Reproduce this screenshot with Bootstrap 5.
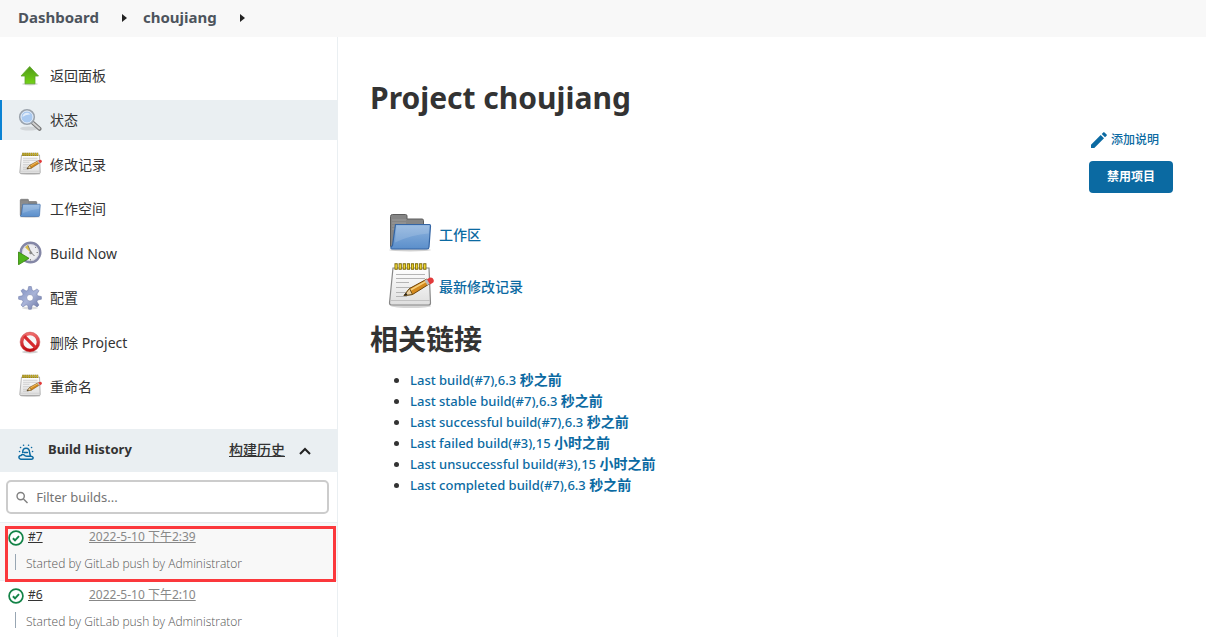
<!DOCTYPE html>
<html lang="zh-CN">
<head>
<meta charset="utf-8">
<meta name="viewport" content="width=device-width, initial-scale=1">
<title>choujiang [Jenkins]</title>
<link href="https://cdn.jsdelivr.net/npm/bootstrap@5.3.0/dist/css/bootstrap.min.css" rel="stylesheet">
<style>
  body { font-family: "Noto Sans", "Noto Sans CJK SC", sans-serif; font-size: 14px; line-height: 21px; color: #333; }
  a { color: #0b6aa2; text-decoration: none; }
  .crumbs { height: 37px; background: #f8f8f8; padding: 0 18px 2px; font-size: 15px; font-weight: 700; }
  .crumbs a { color: #4d545d; }
  .crumbs svg { width: 5px; height: 8px; margin-left: 23px; }
  .side-panel { flex: 0 0 338px; border-right: 1px solid #eaeff2; }
  .tasks { min-height: 351px; margin: 19px 0 22px; }
  .task-link { height: 40px; padding: 0 18px 1px; gap: 8px; color: #333; }
  .task-link svg { width: 24px; height: 24px; }
  .task-link.active { background: #eaeff2; box-shadow: inset 2px 0 #0b83d4; }
  .history-head { height: 43px; background: #eaeff2; padding: 0 26px 2px 18px; font-weight: 500; }
  .history-title { margin-left: 14px; font-size: 13px; font-weight: 700; }
  .history-head a { color: #333; text-decoration: underline; }
  .history-head button { line-height: 1; margin-left: 14px; }
  .filter { margin: 8px 8px 8px 6px; border: 2px solid #ccc; border-radius: 5px; height: 34px; padding: 0 8px; gap: 8px; }
  .filter input { font-size: 13px; padding: 1px 0 0; color: #333; }
  .filter input::placeholder { color: #757575; }
  .run { border-top: 1px solid #eaeff2; height: 58px; padding: 4px 8px 0; font-size: 12px; }
  .run:last-child { height: 57px; }
  .run.current { background: #f8f8f8; }
  .run-line { height: 21px; }
  .run-line a { margin-top: -2px; }
  .run-num { width: 61px; margin: -2px 0 0 4px; }
  .run-num a { color: #333; text-decoration: underline; }
  .run-date { color: #888; text-decoration: underline; }
  .cause { margin: 6px 0 0 7px; padding: 2px 0 0 10px; border-left: 1px solid #98a6b3; line-height: 16px; height: 16px; color: #555; font-family: "Open Sans", sans-serif; font-weight: 300; }
  .run-mark { position: absolute; inset: 3px 1px -2px 5px; border: 3px solid #fb383c; pointer-events: none; }
  .main-panel { padding: 39px 33px 20px 32px; }
  h1 { font-size: 30px; line-height: 44px; font-weight: 700; margin: 0; }
  h2 { font-size: 28px; line-height: 38px; font-weight: 700; margin: 10px 0 12px; }
  .actions { gap: 11px; font-size: 12px; margin: 8px 0 17px; }
  .actions a { margin-right: 14px; gap: 4px; font-weight: 500; padding-top: 1px; }
  .btn-disable { background: #0b6aa2; color: #fff; width: 84px; height: 32px; border-radius: 4px; font-size: 12px; font-weight: 700; padding: 0; }
  .btn-disable:hover { background: #095683; color: #fff; }
  .shortcuts { margin-left: 16px; gap: 4px; font-weight: 500; }
  .shortcuts a { gap: 5px; }
  .permalinks { padding-left: 40px; font-size: 13px; font-weight: 500; }
  .permalinks li { height: 21px; }
  .permalinks span { font-size: 14px; font-weight: 700; line-height: 18px; }
</style>
</head>
<body>
<svg width="0" height="0" class="position-absolute" aria-hidden="true">
  <defs>
    <linearGradient id="gGreen" x2="0" y2="1"><stop stop-color="#4f9a18"/><stop offset="1" stop-color="#73d216"/></linearGradient>
    <linearGradient id="gBlue" x2="0" y2="1"><stop stop-color="#8fb4de"/><stop offset="1" stop-color="#5b8fcb"/></linearGradient>
    <linearGradient id="gPage" x2="0" y2="1"><stop stop-color="#fff"/><stop offset="1" stop-color="#dedede"/></linearGradient>
    <linearGradient id="gGear" x2="1" y2="1"><stop stop-color="#7f8fc0"/><stop offset=".5" stop-color="#a9b4d8"/><stop offset="1" stop-color="#66719e"/></linearGradient>
    <linearGradient id="gRed" x2="0" y2="1"><stop stop-color="#ee6a6a"/><stop offset="1" stop-color="#c00d12"/></linearGradient>
    <symbol id="i-up" viewBox="0 0 24 24">
      <ellipse cx="12" cy="20" rx="8" ry="1.5" fill="#000" opacity=".15"/>
      <path d="M11.700 2.500 20.500 12H17V19.800H7V12H3Z" fill="url(#gGreen)" stroke="#5fa52c" stroke-width=".8" stroke-linejoin="round"/>
    </symbol>
    <symbol id="i-search" viewBox="0 0 24 24">
      <ellipse cx="11" cy="20.500" rx="9" ry="2" fill="#000" opacity=".1"/>
      <path d="m14.500 14.500 7 6.300" stroke="#777" stroke-width="4" stroke-linecap="round"/>
      <path d="m14.500 14.500 6.800 6" stroke="#d0d0d0" stroke-width="2" stroke-linecap="round"/>
      <circle cx="9" cy="9" r="7.200" fill="#a9c9f0" stroke="#9ba3ac" stroke-width="1.800"/>
      <circle cx="9" cy="9" r="6" fill="none" stroke="#e5edf7" stroke-width="1"/>
      <path d="M4.500 9a4.500 4.500 0 0 1 8-2.500Q8 6 4.500 9Z" fill="#fff" opacity=".65"/>
    </symbol>
    <symbol id="i-note" viewBox="0 0 48 48">
      <ellipse cx="25" cy="44" rx="20" ry="2" fill="#000" opacity=".16"/>
      <path d="M7 6H43L44.500 41Q44.500 43 42.500 43H5.500Q3.500 43 3.500 41Z" fill="url(#gPage)" stroke="#888" stroke-width="1.200"/>
      <path d="M4.500 38.500H44" stroke="#c2c2c2"/>
      <path d="M10 12.500H39M10 16.500H39M10 20.500H23M10 25.500H34M10 30.500H22M10 34.500H21" stroke="#b5b5b5" stroke-width="1.200"/>
      <path d="M8.500 4.500H41" stroke="#7a6500" stroke-width="6.500" stroke-dasharray="3.200 .9"/>
      <path d="M9.300 4.500H41" stroke="#edd532" stroke-width="4.500" stroke-dasharray="1.600 2.500"/>
      <path d="m18 33.500 5.500-7L41 17 44 21.500 26.500 32.500Z" fill="#d58a1e" stroke="#6f4408" stroke-width="1"/>
      <path d="m24.500 28 17-9.500" stroke="#f6cf7a" stroke-width="1.500"/>
      <path d="m18 33.500 5.500-7 3 6Z" fill="#ecd0a0" stroke="#5b430f" stroke-width=".8"/>
      <path d="m18 33.500 2.200-2.700 1.100 2.200Z" fill="#222"/>
      <path d="m38.500 18.500 3-1.700 3 4.500-3 1.900Z" fill="#bbb"/>
      <path d="m41 17.200 2.500-1.400q3-.8 4 1.700 1 2.500-1 3.500L44 22.500Z" fill="#e23a3a"/>
    </symbol>
    <symbol id="i-folder" viewBox="0 0 48 48">
      <ellipse cx="24" cy="40" rx="21" ry="1.500" fill="#000" opacity=".18"/>
      <path d="M4.500 36.500V6.500Q4.500 4.500 6.500 4.500H19.500Q21 4.500 21 6V9H36Q37.500 9 37.500 10.500V37.500H5.500Z" fill="#858585" stroke="#5c5c5c"/>
      <path d="M6 13H20M6 10H20M6 16H36M6 19H36" stroke="#a2a2a2" stroke-width=".8"/>
      <path d="M9.500 14.500H43.500Q44.500 14.500 44.500 16L43 37Q42.800 39 41 39H6Q4.500 39 5 37L6.500 35.500Z" fill="url(#gBlue)" stroke="#3465a4" stroke-width="1.200"/>
      <path d="M10.500 15.700H43.200L42.700 23.500Q26 24.500 9 32.500Z" fill="#fff" opacity=".14"/>
    </symbol>
    <symbol id="i-clock" viewBox="0 0 24 24">
      <circle cx="12.500" cy="11.500" r="9.800" fill="#ececf0" stroke="#8487a6" stroke-width="2.400"/>
      <circle cx="12.500" cy="11.500" r="8" fill="none" stroke="#c9cbd6" stroke-width=".6"/>
      <path d="M12.500 11.500 7 6.200 10 3.800Z" fill="#d9bd45"/>
      <path d="m10 4.500 3 7 3.500 3.500" fill="none" stroke="#777" stroke-width="1"/>
      <circle cx="12.800" cy="11.800" r="1.500" fill="#888"/>
      <path d="M18.500 11.500h1.500M12.500 18v1.500M17 7l1-1" stroke="#888"/>
      <path d="M.5 11 11 17.300.5 23.800Z" fill="#4fb41c" stroke="#328108" stroke-width=".8" stroke-linejoin="round"/>
    </symbol>
    <symbol id="i-gear" viewBox="0 0 24 24">
      <ellipse cx="12" cy="22" rx="8" ry="1.500" fill="#000" opacity=".13"/>
      <path fill="url(#gGear)" stroke="#6a76a5" stroke-width=".5" fill-rule="evenodd" d="M10.700.5h2.600l.9 3.800 1.700.7 3.200-2.100 1.900 1.900-2.100 3.200.7 1.700 3.800.9v2.600l-3.800.9-.7 1.700 2.100 3.200-1.900 1.900-3.200-2.100-1.700.7-.9 3.800h-2.600l-.9-3.800-1.700-.7-3.200 2.100-1.900-1.900 2.100-3.200-.7-1.700-3.800-.9v-2.600l3.800-.9.7-1.700L3 4.800l1.900-1.900 3.200 2.100 1.700-.7ZM12 8.500a3.300 3.300 0 1 0 0 6.600 3.300 3.300 0 0 0 0-6.600Z"/>
    </symbol>
    <symbol id="i-stop" viewBox="0 0 24 24">
      <ellipse cx="12" cy="22" rx="8" ry="1.500" fill="#000" opacity=".18"/>
      <circle cx="12" cy="12" r="8.300" fill="#f7f7f7" stroke="url(#gRed)" stroke-width="3.200"/>
      <path d="M6.200 6.200 17.800 17.800" stroke="#d72a2e" stroke-width="3.200"/>
      <circle cx="12" cy="12" r="9.900" fill="none" stroke="#c84a4a" stroke-width=".5"/>
    </symbol>
    <symbol id="i-ok" viewBox="0 0 16 16">
      <circle cx="8" cy="8" r="6.900" fill="#fff" stroke="#138347" stroke-width="1.700"/>
      <path d="m4.900 8.300 2.100 2 4-4.200" fill="none" stroke="#138347" stroke-width="1.900"/>
    </symbol>
    <symbol id="i-crumb" viewBox="0 0 5 8"><path d="M0 0 5 4 0 8Z" fill="#222"/></symbol>
  </defs>
</svg>

<header>
  <nav class="crumbs d-flex align-items-center" aria-label="breadcrumb">
    <a href="#">Dashboard</a>
    <svg class="me-3"><use href="#i-crumb"/></svg>
    <a href="#">choujiang</a>
    <svg><use href="#i-crumb"/></svg>
  </nav>
</header>

<div class="d-flex align-items-stretch">
  <aside class="side-panel">
    <nav class="tasks d-flex flex-column justify-content-between">
      <a class="task-link d-flex align-items-center" href="#"><svg><use href="#i-up"/></svg>返回面板</a>
      <a class="task-link d-flex align-items-center active" href="#" aria-current="page"><svg><use href="#i-search"/></svg>状态</a>
      <a class="task-link d-flex align-items-center" href="#"><svg><use href="#i-note"/></svg>修改记录</a>
      <a class="task-link d-flex align-items-center" href="#"><svg><use href="#i-folder"/></svg>工作空间</a>
      <a class="task-link d-flex align-items-center" href="#"><svg><use href="#i-clock"/></svg>Build Now</a>
      <a class="task-link d-flex align-items-center" href="#"><svg><use href="#i-gear"/></svg>配置</a>
      <a class="task-link d-flex align-items-center" href="#"><svg><use href="#i-stop"/></svg>删除 Project</a>
      <a class="task-link d-flex align-items-center" href="#"><svg><use href="#i-note"/></svg>重命名</a>
    </nav>

    <section>
      <div class="history-head d-flex align-items-center">
        <svg class="mt-1" width="16" height="16" viewBox="0 0 16 16" fill="none" stroke="#0b6aa2" stroke-width="1.500" stroke-linecap="round" stroke-linejoin="round">
          <path d="M2.800 15.200Q.9 15 .9 13.300 1 11.500 3 11.500 4.200 9.900 6 10.900 7.200 12.400 9 12.300L13 12.200Q15 12.300 15.200 13.800 15 15.200 13.500 15.200Z"/>
          <path d="M4.700 8.500Q4.700 4.300 8 4.300 11.500 4.300 11.500 8.300L12.300 11.500M6.200 8.500h3.200M5.500 1.200h.1M10.500 1.200h.1M2.500 3.500h.1M13.500 3.500h.1M1.500 7.500h.1M14.500 7.500h.1"/>
        </svg>
        <span class="history-title">Build History</span>
        <a class="ms-auto" href="#">构建历史</a>
        <button type="button" class="btn p-0 border-0" aria-label="collapse">
          <svg width="12" height="8" viewBox="0 0 12 8"><path d="M1 7 6 2 11 7" fill="none" stroke="#222" stroke-width="2"/></svg>
        </button>
      </div>

      <div class="filter d-flex align-items-center">
        <svg width="13" height="13" viewBox="0 0 13 13" fill="none" stroke="#808080" stroke-width="1.500"><circle cx="5" cy="5" r="3.900"/><path d="m8 8 4.300 4.300"/></svg>
        <input class="form-control border-0 shadow-none bg-transparent" type="text" placeholder="Filter builds..." aria-label="Filter builds">
      </div>

      <div>
        <div class="run current position-relative">
          <div class="run-line d-flex align-items-center">
            <svg width="16" height="16"><use href="#i-ok"/></svg>
            <span class="run-num"><a href="#">#7</a></span>
            <a class="run-date" href="#">2022-5-10 下午2:39</a>
          </div>
          <div class="cause">Started by GitLab push by Administrator</div>
          <div class="run-mark"></div>
        </div>
        <div class="run">
          <div class="run-line d-flex align-items-center">
            <svg width="16" height="16"><use href="#i-ok"/></svg>
            <span class="run-num"><a href="#">#6</a></span>
            <a class="run-date" href="#">2022-5-10 下午2:10</a>
          </div>
          <div class="cause">Started by GitLab push by Administrator</div>
        </div>
      </div>
    </section>
  </aside>

  <main class="main-panel flex-grow-1">
    <h1>Project choujiang</h1>
    <div class="actions d-flex flex-column align-items-end">
      <a class="d-flex align-items-center" href="#">
        <svg width="16" height="16" viewBox="0 0 16 16" fill="#0b6aa2"><path d="M0 12.700 9.700 3 13 6.300 3.300 16H0ZM10.700 2 12.300.4q.6-.6 1.200 0l2.100 2.100q.6.600 0 1.200L14 5.300Z"/></svg>添加说明</a>
      <button type="button" class="btn btn-disable">禁用项目</button>
    </div>
    <div class="shortcuts d-flex flex-column align-items-start">
      <a class="d-flex align-items-center" href="#"><svg width="48" height="48"><use href="#i-folder"/></svg>工作区</a>
      <a class="d-flex align-items-center" href="#"><svg width="48" height="48"><use href="#i-note"/></svg>最新修改记录</a>
    </div>
    <h2>相关链接</h2>
    <ul class="permalinks mb-0">
      <li><a href="#">Last build(#7),6.3 <span>秒之前</span></a></li>
      <li><a href="#">Last stable build(#7),6.3 <span>秒之前</span></a></li>
      <li><a href="#">Last successful build(#7),6.3 <span>秒之前</span></a></li>
      <li><a href="#">Last failed build(#3),15 <span>小时之前</span></a></li>
      <li><a href="#">Last unsuccessful build(#3),15 <span>小时之前</span></a></li>
      <li><a href="#">Last completed build(#7),6.3 <span>秒之前</span></a></li>
    </ul>
  </main>
</div>
<script src="https://cdn.jsdelivr.net/npm/bootstrap@5.3.0/dist/js/bootstrap.bundle.min.js"></script>
</body>
</html>
